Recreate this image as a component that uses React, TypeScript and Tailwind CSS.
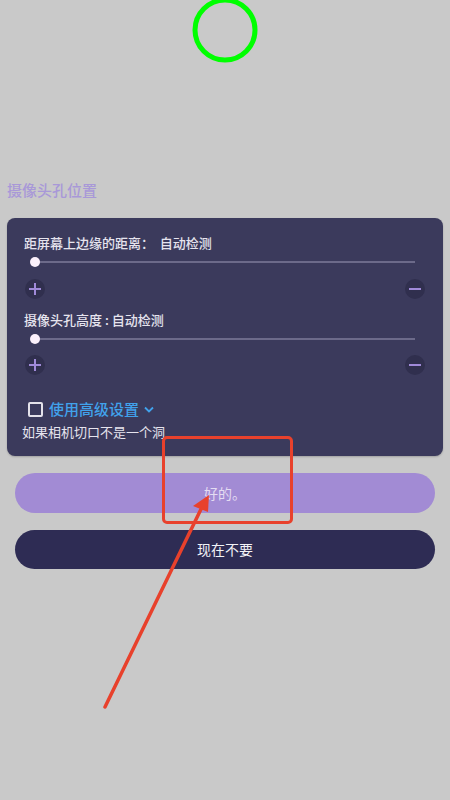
import React from "react"

const font = { fontFamily: '"Noto Sans CJK SC", "Noto Sans", sans-serif' }

const Slider = () => {
  return (
    <div className="relative h-[10px]">
      <div className="absolute left-[10px] right-[10px] top-[4px] h-[2px] bg-[#6c6a8a]" />
      <div className="absolute left-[5px] top-0 h-[10px] w-[10px] rounded-full bg-[#fbf0fb]" />
    </div>
  )
}

const StepButtons = () => {
  return (
    <div className="flex items-center justify-between">
      <button className="flex h-[20px] w-[20px] items-center justify-center rounded-full bg-[#302f4e]">
        <svg width="12" height="12" viewBox="0 0 12 12" fill="none" stroke="#a08ad9" strokeWidth={2}>
          <path d="M6 0v12M0 6h12" />
        </svg>
      </button>
      <button className="flex h-[20px] w-[20px] items-center justify-center rounded-full bg-[#302f4e]">
        <svg width="12" height="12" viewBox="0 0 12 12" fill="none" stroke="#a08ad9" strokeWidth={2}>
          <path d="M0 6h12" />
        </svg>
      </button>
    </div>
  )
}

export default function App() {
  return (
    <div className="relative h-[800px] w-[450px] overflow-hidden bg-[#c9c9c9]" style={font}>
      <div className="flex h-[179px] justify-center">
        <svg width="70" height="66" viewBox="0 0 70 66" fill="none">
          <circle cx="35" cy="30" r="30" stroke="#00ff00" strokeWidth={5} />
        </svg>
      </div>
      <div className="h-[22px] pl-[7px] text-[15px] font-medium leading-[22px] text-[#a898d8]">摄像头孔位置</div>

      <div className="mx-[7px] mt-[17px] rounded-[8px] bg-[#3b3a5c] px-[18px] pb-[14px] pt-[15px] shadow-[0_1px_2px_rgba(0,0,0,0.2)]">
        <div className="-ml-px h-[20px] text-[13px] font-medium leading-[20px] text-[#e6e4ee]">距屏幕上边缘的距离：&nbsp;&nbsp;自动检测</div>
        <div className="mt-[4px]">
          <Slider />
        </div>
        <div className="mt-[12px]">
          <StepButtons />
        </div>
        <div className="-ml-px mt-[11px] h-[20px] text-[13px] font-medium leading-[20px] text-[#e6e4ee]">摄像头孔高度 : 自动检测</div>
        <div className="mt-[4px]">
          <Slider />
        </div>
        <div className="mt-[11px]">
          <StepButtons />
        </div>
        <div className="mt-[23px] flex h-[22px] items-center">
          <div className="ml-[3px] h-[15px] w-[15px] rounded-[2px] border-2 border-[#e4e2ea]" />
          <span className="ml-[6px] text-[15px] font-medium leading-[22px] text-[#41a2ec]">使用高级设置</span>
          <svg className="ml-[5px]" width="10" height="7" viewBox="0 0 10 7" fill="none" stroke="#41a2ec" strokeWidth={1.8}>
            <path d="M1 1.5l4 4 4-4" />
          </svg>
        </div>
        <div className="-ml-[3px] mt-[2px] h-[20px] text-[13px] leading-[20px] text-[#e6e4ee]">如果相机切口不是一个洞</div>
      </div>

      <div className="mx-[15px] mt-[17px] flex flex-col gap-[17px]">
        <button className="h-[40px] rounded-full bg-[#a28bd4] text-[14px] text-[#e4dcf2]">好的。</button>
        <button className="h-[39px] rounded-full bg-[#2e2c54] text-[14px] text-[#f2f2f6]">现在不要</button>
      </div>

      {/* annotation overlay */}
      <div className="absolute left-[162px] top-[436px] h-[88px] w-[131px] rounded-[5px] border-[3px] border-[#e8412c]" />
      <svg className="absolute left-0 top-0" width="450" height="800" viewBox="0 0 450 800" fill="none">
        <path d="M105 707L203 505" stroke="#e8412c" strokeWidth={3.5} strokeLinecap="round" />
        <path d="M209 495L193 506L208 512Z" fill="#e8412c" />
      </svg>
    </div>
  )
}
